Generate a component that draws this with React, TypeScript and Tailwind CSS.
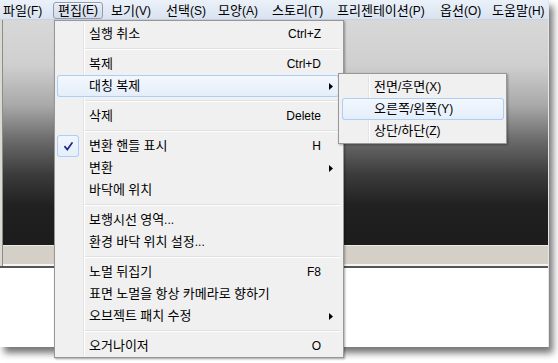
import React from "react";

type Entry =
  | { label: string; shortcut?: string; sub?: boolean; hl?: boolean; check?: boolean }
  | "sep";

const mainItems: Entry[] = [
  { label: "실행 취소", shortcut: "Ctrl+Z" },
  "sep",
  { label: "복제", shortcut: "Ctrl+D" },
  { label: "대칭 복제", sub: true, hl: true },
  "sep",
  { label: "삭제", shortcut: "Delete" },
  "sep",
  { label: "변환 핸들 표시", shortcut: "H", check: true },
  { label: "변환", sub: true },
  { label: "바닥에 위치" },
  "sep",
  { label: "보행시선 영역..." },
  { label: "환경 바닥 위치 설정..." },
  "sep",
  { label: "노멀 뒤집기", shortcut: "F8" },
  { label: "표면 노멀을 항상 카메라로 향하기" },
  { label: "오브젝트 패치 수정", sub: true },
  "sep",
  { label: "오거나이저", shortcut: "O" },
];

const subItems: Entry[] = [
  { label: "전면/후면(X)" },
  { label: "오른쪽/왼쪽(Y)", hl: true },
  { label: "상단/하단(Z)" },
];

const bar: { label: string; w: string; active?: boolean }[] = [
  { label: "파일(F)", w: "w-[55px]" },
  { label: "편집(E)", w: "w-[53px]", active: true },
  { label: "보기(V)", w: "w-[55px]" },
  { label: "선택(S)", w: "w-[52px]" },
  { label: "모양(A)", w: "w-[54px]" },
  { label: "스토리(T)", w: "w-[65px]" },
  { label: "프리젠테이션(P)", w: "w-[103px]" },
  { label: "옵션(O)", w: "w-[52px]" },
  { label: "도움말(H)", w: "w-[56px]" },
];

// Hangul runs are set a touch larger so that their widths match the reference font
function Txt({ s }: { s: string }) {
  const parts = s.match(/[\uAC00-\uD7A3]+|[^\uAC00-\uD7A3]+/g) || [];
  return (
    <>
      {parts.map((p, i) =>
        /[\uAC00-\uD7A3]/.test(p) ? (
          <span key={i} className="text-[13px]">
            {p}
          </span>
        ) : (
          <span key={i}>{p}</span>
        )
      )}
    </>
  );
}

function Arrow() {
  return (
    <svg width="4" height="7" viewBox="0 0 4 7" className="block">
      <polygon points="0,0 4,3.5 0,7" fill="#000" />
    </svg>
  );
}

function Check() {
  return (
    <svg width="9" height="9" viewBox="0 0 9 9" className="block">
      <path d="M1 4.8 L3.3 7.6 L8 1" fill="none" stroke="#1a2b86" strokeWidth="1.7" strokeLinecap="square" />
    </svg>
  );
}

function MenuList({ items }: { items: Entry[] }) {
  return (
    <div className="relative">
      <div className="absolute left-[26px] top-0 bottom-0 w-[2px] border-l border-[#e2e3e3] bg-white" />
      {items.map((it, i) =>
        it === "sep" ? (
          <div key={i} className="relative h-[8px] flex items-center pl-[28px]">
            <div className="flex-1 h-[2px] border-t border-[#e0e0e0] bg-white" />
          </div>
        ) : (
          <div
            key={i}
            className={`relative h-[22px] flex items-center rounded-[3px] ${
              it.hl
                ? "bg-[linear-gradient(#f4f8fe,#e3edfa)] shadow-[inset_0_0_0_1px_#aecff5]"
                : ""
            }`}
          >
            <span
              className={`w-[22px] h-[22px] mr-[10px] shrink-0 flex items-center justify-center rounded-[3px] ${
                it.check
                  ? "bg-[linear-gradient(#f1f6fd,#e4eefa)] shadow-[inset_0_0_0_1px_#aecff5]"
                  : ""
              }`}
            >
              {it.check ? <Check /> : null}
            </span>
            <span className="flex-1 whitespace-nowrap leading-[15px]">
              <Txt s={it.label} />
            </span>
            {it.shortcut ? <span className="whitespace-nowrap leading-[15px]">{it.shortcut}</span> : null}
            <span className="w-[18px] shrink-0 pl-[8px] flex items-center">{it.sub ? <Arrow /> : null}</span>
          </div>
        )
      )}
    </div>
  );
}

export default function App() {
  return (
    <div className="relative w-[558px] h-[363px] overflow-hidden bg-white text-[12px] text-black font-['Liberation_Sans','Noto_Sans_CJK_KR',sans-serif]">
      <div className="w-[549px] h-[347px] flex flex-col bg-white border-r border-[#e6e6e6] shadow-[4px_6px_7px_rgba(0,0,0,0.55)]">
        {/* menu bar */}
        <div className="h-[20px] flex items-start pt-[2px] pl-[3px] border-b border-[#c9d2de] bg-[linear-gradient(#ebf1f9,#d9e3f0)]">
          {bar.map((b) => (
            <div key={b.label} className={`${b.w} h-[17px] flex items-center whitespace-nowrap`}>
              {b.active ? (
                <span className="-ml-[5px] h-[17px] px-[4px] flex items-center rounded-[3px] border border-[#8d9cb2] bg-[linear-gradient(#e6ecf5,#d3dcea)] shadow-[inset_0_1px_0_rgba(255,255,255,0.6)] leading-[15px]">
                  <Txt s={b.label} />
                </span>
              ) : (
                <span className="leading-[15px]">
                  <Txt s={b.label} />
                </span>
              )}
            </div>
          ))}
        </div>

        {/* dark panel */}
        <div className="h-[248px] flex bg-[#dcd9d3] pl-[2px] border-b-2 border-[#555555]">
          <div className="flex-1 flex flex-col border-l border-[#8c8c8c]">
            <div className="flex-1 bg-[linear-gradient(to_bottom,#d8d8d8_0px,#cfcfcf_45px,#a9a9a9_85px,#6b6b6b_120px,#3b3b3b_155px,#212121_185px,#1c1c1c_100%)]" />
            <div className="h-[19px] border-t border-[#ebe9e4] bg-[#d4d0c8]" />
            <div className="h-[2px] bg-[#f6f5f2]" />
          </div>
        </div>

        <div className="flex-1 bg-white" />
      </div>

      {/* Edit menu */}
      <div className="absolute left-[54px] top-[20px] w-[290px] border border-[#979797] bg-[#f0f0f0] pt-[2px] pl-[2px] pr-[4px] shadow-[1px_1px_2px_rgba(0,0,0,0.35)]">
        <MenuList items={mainItems} />
      </div>

      {/* Submenu */}
      <div className="absolute left-[338px] top-[73px] w-[169px] border border-[#979797] bg-[#f0f0f0] pt-[2px] pb-[1px] pl-[3px] pr-[2px] shadow-[1px_1px_2px_rgba(0,0,0,0.3)]">
        <MenuList items={subItems} />
      </div>
    </div>
  );
}
